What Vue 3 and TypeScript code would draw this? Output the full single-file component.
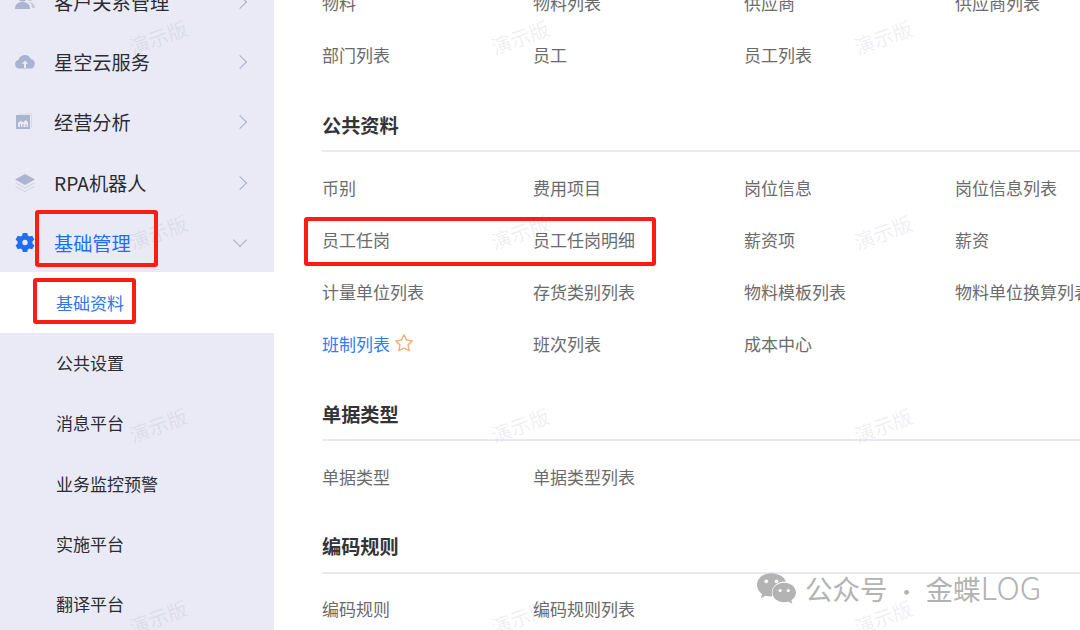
<script setup lang="ts">
interface Item { label: string; active?: boolean; star?: boolean }
interface Section { title?: string; items: Item[] }
const toItems = (s: string): Item[] => s.split(' ').map((label) => ({ label }))
const sections: Section[] = [
  { items: toItems('物料 物料列表 供应商 供应商列表 部门列表 员工 员工列表') },
  {
    title: '公共资料',
    items: [
      ...toItems('币别 费用项目 岗位信息 岗位信息列表 员工任岗 员工任岗明细 薪资项 薪资 计量单位列表 存货类别列表 物料模板列表 物料单位换算列表'),
      { label: '班制列表', active: true, star: true },
      ...toItems('班次列表 成本中心')
    ]
  },
  { title: '单据类型', items: toItems('单据类型 单据类型列表') },
  { title: '编码规则', items: toItems('编码规则 编码规则列表') }
]
const subs = ['公共设置', '消息平台', '业务监控预警', '实施平台', '翻译平台']
const marks = [37, 232, 425, 617].flatMap((y) => [158, 520, 883].map((x) => ({ x, y })))
</script>

<template>
  <div class="page">
    <aside class="side">
      <div class="menu">
        <svg class="ic" viewBox="0 0 20 20"><circle cx="7.500" cy="5" r="4.500" fill="#abb5cf"/><path d="M0 17c0-5 3-7 7.500-7s7.500 2 7.500 7z" fill="#abb5cf"/><circle cx="15" cy="6" r="3" fill="#c5cce0"/><path d="M14 10c3 0 6 2 6 6h-3c0-3-1-5-3-6z" fill="#c5cce0"/></svg>
        <span>客户关系管理</span><i class="chev"></i>
      </div>
      <div class="menu">
        <svg class="ic" viewBox="0 0 20 20"><path d="M4.500 16.500A4.300 4.300 0 0 1 3.500 8 6.500 6.500 0 0 1 15.800 7a4.800 4.800 0 0 1-.3 9.500z" fill="#a9b4d0"/><path d="M10 8.500l3.200 3.200H11V16H9v-4.300H6.800z" fill="#e9eaf5"/></svg>
        <span>星空云服务</span><i class="chev"></i>
      </div>
      <div class="menu">
        <svg class="ic" viewBox="0 0 20 20"><rect x="1" y="3" width="14" height="14" fill="#abb5cf"/><path d="M3 15v-4l2.500-2.500L8 10.500l2.500-2.500 2.500 2v5h-1.500v-3h-1v3H8.500v-3h-1v3H6v-3H5v3z" fill="#e9eaf5"/><path d="M3 2h13.500v14" fill="none" stroke="#d5d9e8"/></svg>
        <span>经营分析</span><i class="chev"></i>
      </div>
      <div class="menu">
        <svg class="ic" viewBox="0 0 20 20"><path d="M10 1l10 5.500-10 5.500L0 6.500z" fill="#abb5cf"/><path d="M.5 10l9.500 5 9.500-5M.5 13.500l9.500 5 9.500-5" fill="none" stroke="#cdd3e4"/></svg>
        <span>RPA机器人</span><i class="chev"></i>
      </div>
      <div class="menu on">
        <svg class="ic" viewBox="0 0 20 20"><path fill="#1f6cf5" fill-rule="evenodd" d="M7.800 0h4.400l.6 2.600 1.800 1 2.600-.8 2.200 3.800-2 1.800v2.200l2 1.800-2.200 3.800-2.600-.8-1.800 1-.6 2.600H7.800l-.6-2.600-1.800-1-2.600.8L.6 12.400l2-1.800V8.400L.6 6.600l2.200-3.800 2.600.8 1.800-1zM10 6.800a2.700 2.700 0 1 0 0 5.400 2.700 2.700 0 0 0 0-5.400z"/></svg>
        <span>基础管理</span><i class="chev down"></i>
      </div>
      <div class="sub current">基础资料</div>
      <div v-for="s in subs" :key="s" class="sub">{{ s }}</div>
    </aside>

    <main class="main">
      <section v-for="(sec, i) in sections" :key="i" class="sec">
        <h3 v-if="sec.title">{{ sec.title }}</h3>
        <div class="grid">
          <div v-for="it in sec.items" :key="it.label" class="cell" :class="{ link: it.active }">
            {{ it.label }}
            <svg v-if="it.star" class="star" viewBox="0 0 20 20"><path d="M10 1.800l2.500 5.300 5.700.8-4.100 4 1 5.800L10 15.100l-5.100 2.600 1-5.800-4.100-4 5.700-.8z" fill="none" stroke="#f3b27e" stroke-width="1.500" stroke-linejoin="round"/></svg>
          </div>
        </div>
      </section>
    </main>

    <span v-for="m in marks" :key="m.x + '-' + m.y" class="mark" :style="{ left: m.x + 'px', top: m.y + 'px' }">演示版</span>

    <div class="box b1"></div>
    <div class="box b2"></div>
    <div class="box b3"></div>

    <div class="brand">
      <svg class="wx" viewBox="0 0 40 32">
        <path d="M15 1C7 1 1 6 1 12.500c0 3.700 2 6.800 5 9l-1.200 4 4.500-2.400c1.800.5 3.700.8 5.700.8h1c-.4-1.200-.6-2.400-.6-3.700 0-6.200 5.600-11 12.800-11h1C27.800 4.500 22 1 15 1z" fill="#b3b3b3"/>
        <path d="M27.500 10.500C21 10.500 16 14.700 16 20s5 9.500 11.500 9.500c1.500 0 3-.2 4.300-.7l3.700 2-1-3.400c2.800-1.800 4.500-4.500 4.500-7.400 0-5.300-5-9.500-11.500-9.500z" fill="#b3b3b3"/>
        <circle cx="10" cy="9" r="1.800" fill="#fff"/><circle cx="20" cy="9" r="1.800" fill="#fff"/>
        <circle cx="23.500" cy="18" r="1.500" fill="#fff"/><circle cx="31.500" cy="18" r="1.500" fill="#fff"/>
      </svg>
      <span>公众号<span class="dot">·</span>金蝶<span class="log">LOG</span></span>
    </div>
  </div>
</template>

<style scoped>
.page {
  position: relative;
  width: 1080px;
  height: 630px;
  overflow: hidden;
  display: flex;
  background: #fff;
  font-family: "Noto Sans CJK SC", "Noto Sans", sans-serif;
}
.side {
  flex: 0 0 274px;
  height: 630px;
  overflow: hidden;
  background: #e9eaf5;
}
.menu {
  height: 60.2px;
  margin-left: 15px;
  padding-right: 26px;
  display: flex;
  align-items: center;
  font-size: 19.2px;
  color: #2b2b33;
}
.menu:first-child { margin-top: -28px; }
.menu span { margin-left: 19px; flex: 1; }
.menu .chev { margin-right: 3px; }
.menu.on { height: 59.6px; padding-top: 1.5px; box-sizing: border-box; }
.ic { width: 20px; height: 20px; flex: none; }
.chev {
  width: 9px;
  height: 9px;
  border-top: 1.500px solid #a6adc4;
  border-right: 1.500px solid #a6adc4;
  transform: rotate(45deg);
}
.chev.down { transform: translateY(-3px) rotate(135deg); }
.on { color: #1f6cf5; }
.sub {
  height: 60.2px;
  padding-left: 56px;
  display: flex;
  align-items: center;
  font-size: 17px;
  color: #2b2b33;
}
.current { background: #fff; color: #2f76f0; }
.main {
  flex: 1;
  min-width: 0;
  padding: 0 0 0 48px;
  overflow: hidden;
}
.sec:first-child { margin-top: -24px; }
h3 {
  margin: 0;
  line-height: 29px;
  font-size: 19.200px;
  font-weight: 700;
  color: #33333a;
  border-bottom: 2px solid #e8e9f3;
  box-sizing: border-box;
}
.sec:nth-child(2) h3 { margin-top: 30px; height: 42px; margin-bottom: 9px; line-height: 31px; }
.sec:nth-child(3) h3 { margin-top: 31px; height: 41px; margin-bottom: 9px; }
.sec:nth-child(4) h3 { margin-top: 30px; height: 42px; margin-bottom: 8px; }
.grid {
  display: grid;
  grid-template-columns: repeat(4, 211px);
  grid-auto-rows: 52px;
}
.cell {
  display: flex;
  align-items: center;
  font-size: 17px;
  color: #6b6b6b;
  white-space: nowrap;
}
.link { color: #2f7cf6; }
.star { width: 20px; height: 20px; margin-left: 4px; }
.mark {
  position: absolute;
  transform: translate(-50%, -50%) rotate(-20deg);
  font-size: 20px;
  color: rgba(120, 125, 150, 0.13);
  pointer-events: none;
}
.box {
  position: absolute;
  border: 4px solid #fb1c14;
  border-radius: 3px;
  box-sizing: border-box;
}
.b1 { left: 35px; top: 210px; width: 123px; height: 57px; }
.b2 { left: 33px; top: 278px; width: 103px; height: 46px; }
.b3 { left: 304px; top: 217px; width: 352px; height: 49px; }
.brand {
  position: absolute;
  left: 756px;
  top: 568px;
  display: flex;
  align-items: center;
  gap: 8px;
  font-size: 27.500px;
  line-height: 36px;
  color: #b3b3b3;
  white-space: nowrap;
}
.dot { display: inline-block; width: 38px; text-align: center; font-size: 22px; }
.log { font-size: 32px; font-weight: 300; }
.wx { width: 41px; height: 33px; }
</style>
